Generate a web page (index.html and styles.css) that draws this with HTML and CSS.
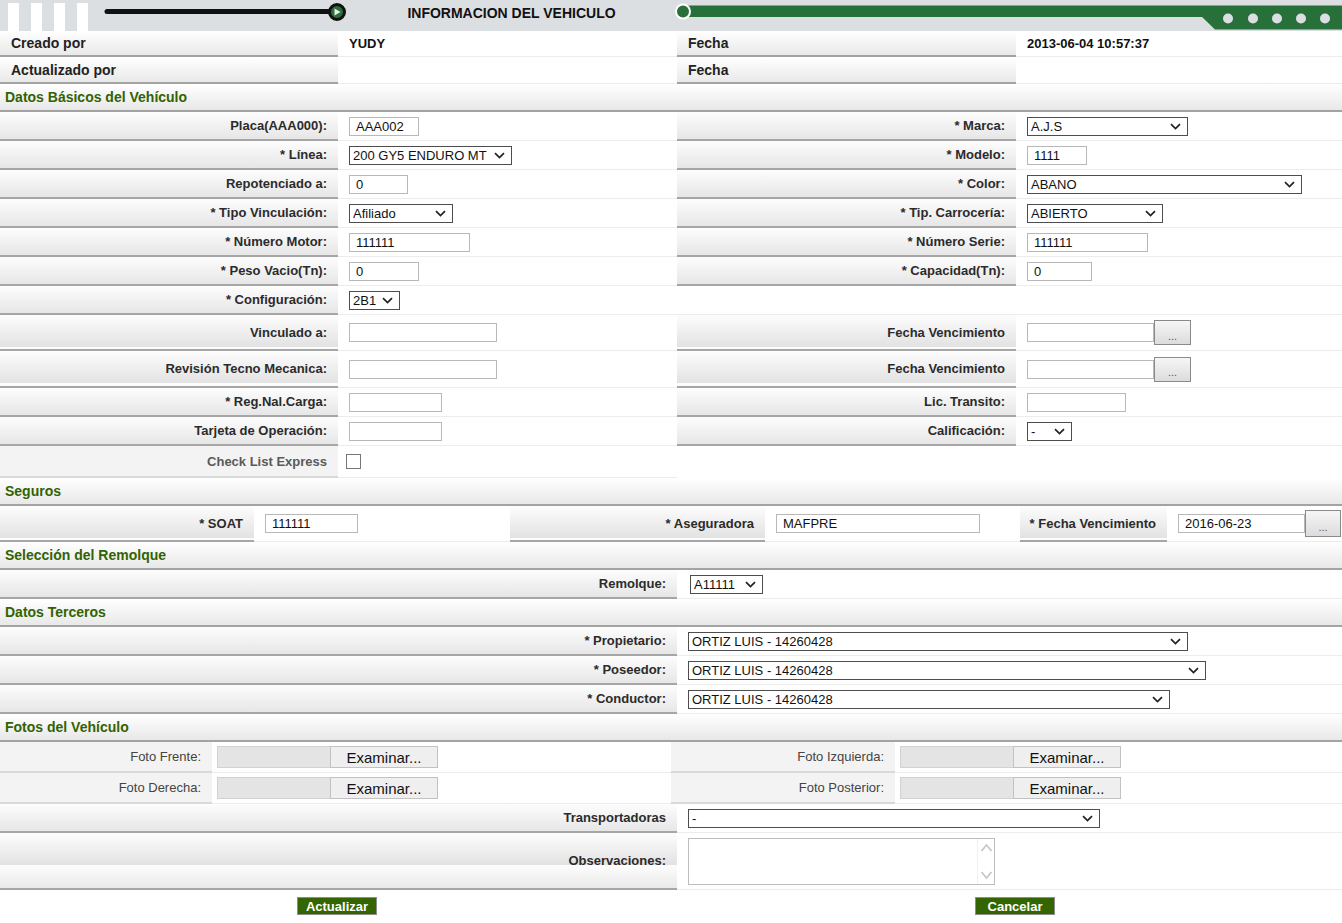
FILE: index.html
```html
<!DOCTYPE html>
<html lang="es">
<head>
<meta charset="utf-8">
<title>Informacion del vehiculo</title>
<link rel="stylesheet" href="styles.css">
</head>
<body>
<header class="topbar">
  <svg class="deco-left" width="400" height="31" viewBox="0 0 400 31" aria-hidden="true">
    <rect x="8" y="3" width="11" height="28" fill="#fff"/>
    <rect x="31" y="3" width="11" height="28" fill="#fff"/>
    <rect x="54" y="3" width="11" height="28" fill="#fff"/>
    <rect x="77" y="3" width="11" height="28" fill="#fff"/>
    <line x1="107" y1="11.5" x2="330" y2="11.5" stroke="#111" stroke-width="5" stroke-linecap="round"/>
    <circle cx="337" cy="12" r="7.5" fill="#2d6e3d" stroke="#111" stroke-width="3"/>
    <path d="M334.5 8.5 L340.5 12 L334.5 15.5 Z" fill="#e8f0e8"/>
  </svg>
  <h1 class="title">INFORMACION DEL VEHICULO</h1>
  <svg class="deco-right" width="719" height="31" viewBox="0 0 719 31" aria-hidden="true">
    <rect x="64" y="5.5" width="655" height="11.5" fill="#277039"/>
    <polygon points="578,16 592,29.5 719,29.5 719,16" fill="#277039"/>
    <circle cx="605" cy="18.5" r="5" fill="#dcdfe2"/>
    <circle cx="630" cy="18.5" r="5" fill="#dcdfe2"/>
    <circle cx="654" cy="18.5" r="5" fill="#dcdfe2"/>
    <circle cx="678" cy="18.5" r="5" fill="#dcdfe2"/>
    <circle cx="702" cy="18.5" r="5" fill="#dcdfe2"/>
    <circle cx="60" cy="11.5" r="7" fill="#277039" stroke="#fff" stroke-width="2"/>
  </svg>
</header>

<main class="form">
  <div class="row info h26">
    <div class="lbl left">Creado por</div><div class="val strong">YUDY</div>
    <div class="lbl left">Fecha</div><div class="val strong">2013-06-04 10:57:37</div>
  </div>
  <div class="row info h27">
    <div class="lbl left">Actualizado por</div><div class="val"></div>
    <div class="lbl left">Fecha</div><div class="val"></div>
  </div>

  <div class="section h27">Datos Básicos del Vehículo</div>
  <div class="row">
    <div class="lbl">Placa(AAA000):</div><div class="val"><input class="txt w70" value="AAA002"></div>
    <div class="lbl">* Marca:</div><div class="val"><select class="sel w161"><option>A.J.S</option></select></div>
  </div>
  <div class="row">
    <div class="lbl">* Línea:</div><div class="val"><select class="sel w163"><option>200 GY5 ENDURO MT</option></select></div>
    <div class="lbl">* Modelo:</div><div class="val"><input class="txt w60" value="1111"></div>
  </div>
  <div class="row">
    <div class="lbl">Repotenciado a:</div><div class="val"><input class="txt w59" value="0"></div>
    <div class="lbl">* Color:</div><div class="val"><select class="sel w275"><option>ABANO</option></select></div>
  </div>
  <div class="row">
    <div class="lbl">* Tipo Vinculación:</div><div class="val"><select class="sel w104"><option>Afiliado</option></select></div>
    <div class="lbl">* Tip. Carrocería:</div><div class="val"><select class="sel w136"><option>ABIERTO</option></select></div>
  </div>
  <div class="row">
    <div class="lbl">* Número Motor:</div><div class="val"><input class="txt w121" value="111111"></div>
    <div class="lbl">* Número Serie:</div><div class="val"><input class="txt w121" value="111111"></div>
  </div>
  <div class="row">
    <div class="lbl">* Peso Vacio(Tn):</div><div class="val"><input class="txt w70" value="0"></div>
    <div class="lbl">* Capacidad(Tn):</div><div class="val"><input class="txt w65" value="0"></div>
  </div>
  <div class="row">
    <div class="lbl">* Configuración:</div><div class="val"><select class="sel w51"><option>2B1</option></select></div>
    <div class="val span2"></div>
  </div>
  <div class="row h36">
    <div class="lbl">Vinculado a:</div><div class="val"><input class="txt w148"></div>
    <div class="lbl">Fecha Vencimiento</div>
    <div class="val"><span class="date"><input class="txt w127"><button class="pick" type="button">...</button></span></div>
  </div>
  <div class="row h37">
    <div class="lbl">Revisión Tecno Mecanica:</div><div class="val"><input class="txt w148"></div>
    <div class="lbl">Fecha Vencimiento</div>
    <div class="val"><span class="date"><input class="txt w127"><button class="pick" type="button">...</button></span></div>
  </div>
  <div class="row">
    <div class="lbl">* Reg.Nal.Carga:</div><div class="val"><input class="txt w93"></div>
    <div class="lbl">Lic. Transito:</div><div class="val"><input class="txt w99"></div>
  </div>
  <div class="row">
    <div class="lbl">Tarjeta de Operación:</div><div class="val"><input class="txt w93"></div>
    <div class="lbl">Calificación:</div><div class="val"><select class="sel w45"><option>-</option></select></div>
  </div>
  <div class="row h32">
    <div class="lbl flat muted">Check List Express</div><div class="val chk"><input type="checkbox" class="box"></div>
    <div class="val span2 noline"></div>
  </div>

  <div class="section h27">Seguros</div>
  <div class="row soat h36">
    <div class="lbl">* SOAT</div><div class="val"><input class="txt w93" value="111111"></div>
    <div class="lbl">* Aseguradora</div><div class="val"><input class="txt w204" value="MAFPRE"></div>
    <div class="lbl">* Fecha Vencimiento</div>
    <div class="val"><span class="date"><input class="txt w127" value="2016-06-23"><button class="pick tall" type="button">...</button></span></div>
  </div>

  <div class="section h28">Selección del Remolque</div>
  <div class="row wide">
    <div class="lbl">Remolque:</div><div class="val p13"><select class="sel w73"><option>A11111</option></select></div>
  </div>

  <div class="section h29">Datos Terceros</div>
  <div class="row wide">
    <div class="lbl">* Propietario:</div><div class="val"><select class="sel w500"><option>ORTIZ LUIS - 14260428</option></select></div>
  </div>
  <div class="row wide">
    <div class="lbl">* Poseedor:</div><div class="val"><select class="sel w518"><option>ORTIZ LUIS - 14260428</option></select></div>
  </div>
  <div class="row wide">
    <div class="lbl">* Conductor:</div><div class="val"><select class="sel w482"><option>ORTIZ LUIS - 14260428</option></select></div>
  </div>

  <div class="section h28">Fotos del Vehículo</div>
  <div class="row fotos h31">
    <div class="lbl flat plain">Foto Frente:</div>
    <div class="val p5"><span class="file"><span class="file-name"></span><button class="file-btn" type="button">Examinar...</button></span></div>
    <div class="lbl flat plain">Foto Izquierda:</div>
    <div class="val p5"><span class="file"><span class="file-name"></span><button class="file-btn" type="button">Examinar...</button></span></div>
  </div>
  <div class="row fotos h31">
    <div class="lbl flat plain">Foto Derecha:</div>
    <div class="val p5"><span class="file"><span class="file-name"></span><button class="file-btn" type="button">Examinar...</button></span></div>
    <div class="lbl flat plain">Foto Posterior:</div>
    <div class="val p5"><span class="file"><span class="file-name"></span><button class="file-btn" type="button">Examinar...</button></span></div>
  </div>
  <div class="row wide">
    <div class="lbl">Transportadoras</div><div class="val"><select class="sel w412"><option>-</option></select></div>
  </div>
  <div class="row wide h57">
    <div class="lbl">Observaciones:</div>
    <div class="val">
      <span class="ta"><textarea class="ta-field"></textarea><span class="ta-scroll">
        <svg width="17" height="14" viewBox="0 0 17 14"><path d="M3.5 10 L8.5 4 L13.5 10" fill="none" stroke="#c4c4c4" stroke-width="1.6"/></svg>
        <svg width="17" height="14" viewBox="0 0 17 14"><path d="M3.5 4 L8.5 10 L13.5 4" fill="none" stroke="#c4c4c4" stroke-width="1.6"/></svg>
      </span></span>
    </div>
  </div>

  <div class="actions">
    <div class="act left"><button class="btn" type="button">Actualizar</button></div>
    <div class="act right"><button class="btn" type="button">Cancelar</button></div>
  </div>
</main>
</body>
</html>
```

FILE: styles.css
```css
* { box-sizing: border-box; }

body {
  margin: 0;
  width: 1342px;
  background: #fff;
  color: #222;
  font-family: "Liberation Sans", Arial, sans-serif;
  font-size: 13px;
}

/* ---------- top bar ---------- */
.topbar {
  display: flex;
  height: 31px;
  background: #dcdfe2;
}
.deco-left, .deco-right { display: block; flex: none; }
.title {
  width: 223px;
  margin: 0;
  padding-bottom: 5px;
  font-size: 14px;
  font-weight: bold;
  line-height: 26px;
  text-align: center;
  color: #111;
  white-space: nowrap;
}

/* ---------- rows ---------- */
.row {
  display: grid;
  grid-template-columns: 338px 339px 339px 1fr;
  height: 29px;
}
.row.wide { grid-template-columns: 677px 1fr; }
.row.soat { grid-template-columns: 254px 256px 255px 255px 147px 1fr; }
.row.fotos { grid-template-columns: 212px 459px 224px 1fr; }

.h26 { height: 26px; }
.h27 { height: 27px; }
.h28 { height: 28px; }
.h29 { height: 29px; }
.h31 { height: 31px; }
.h32 { height: 32px; }
.h36 { height: 36px; }
.h37 { height: 37px; }
.h57 { height: 57px; }

.lbl {
  display: flex;
  align-items: center;
  justify-content: flex-end;
  padding-right: 11px;
  font-weight: bold;
  color: #2b2b2b;
  white-space: nowrap;
  background: linear-gradient(#fdfdfd, #e2e2e2) top / 100% 32px repeat-y;
  border-bottom: 2px solid #a6a6a6;
}
.lbl.left {
  justify-content: flex-start;
  padding: 0 0 0 11px;
  font-size: 14px;
  color: #222;
  background: linear-gradient(#ffffff, #e9e9e9);
  border-bottom: 2px solid #a3a3a3;
}
.lbl.flat {
  background: #f3f3f3;
  border-bottom: 2px solid #d9d9d9;
}
.lbl.muted { color: #5a5a5a; }
.lbl.plain { font-weight: normal; color: #444; }

.val {
  display: flex;
  align-items: center;
  padding-left: 11px;
  border-bottom: 1px solid #ececec;
  background: #fff;
}
.val.strong { font-weight: bold; color: #111; }
.val.span2 { grid-column: span 2; }
.val.noline { border-bottom-color: #fff; }
.val.chk { padding-left: 8px; }
.val.p13 { padding-left: 13px; }
.val.p5 { padding-left: 5px; }

/* ---------- section headers ---------- */
.section {
  display: flex;
  align-items: center;
  height: 28px;
  padding-left: 5px;
  font-size: 14px;
  font-weight: bold;
  color: #326302;
  background: linear-gradient(#ffffff, #e8e8e8);
  border-bottom: 2px solid #a3a3a3;
}

/* ---------- controls ---------- */
.txt {
  height: 19px;
  margin: 0;
  padding: 0 6px;
  border: 1px solid #b8b8b8;
  border-radius: 0;
  background: #fff;
  font-family: "Liberation Sans", Arial, sans-serif;
  font-size: 13px;
  color: #111;
  outline: none;
}
.sel {
  -webkit-appearance: none;
  appearance: none;
  height: 19px;
  margin: 0;
  padding: 0 20px 0 3px;
  border: 1px solid #4d4d4d;
  border-radius: 0;
  background: #fff url("data:image/svg+xml,%3Csvg xmlns='http://www.w3.org/2000/svg' width='11' height='7' viewBox='0 0 11 7'%3E%3Cpath d='M1 1.2 L5.5 5.6 L10 1.2' fill='none' stroke='%23222' stroke-width='1.7'/%3E%3C/svg%3E") no-repeat right 6px center;
  font-family: "Liberation Sans", Arial, sans-serif;
  font-size: 13px;
  line-height: 15px;
  color: #111;
  outline: none;
}

.w45 { width: 45px; }
.w51 { width: 51px; }
.w59 { width: 59px; }
.w60 { width: 60px; }
.w65 { width: 65px; }
.w70 { width: 70px; }
.w73 { width: 73px; }
.w93 { width: 93px; }
.w99 { width: 99px; }
.w104 { width: 104px; }
.w121 { width: 121px; }
.w127 { width: 127px; }
.w136 { width: 136px; }
.w148 { width: 148px; }
.w161 { width: 161px; }
.w163 { width: 163px; }
.w204 { width: 204px; }
.w275 { width: 275px; }
.w412 { width: 412px; }
.w482 { width: 482px; }
.w500 { width: 500px; }
.w518 { width: 518px; }

.date { display: flex; align-items: center; }
.pick {
  width: 37px;
  height: 25px;
  margin: 0;
  padding: 6px 0 0;
  border: 1px solid #8a8a8a;
  background: linear-gradient(#f6f6f6, #dcdcdc);
  font-family: "Liberation Sans", Arial, sans-serif;
  font-size: 11px;
  color: #555;
}
.pick.tall { width: 36px; height: 27px; }

.box {
  width: 15px;
  height: 15px;
  margin: 0;
  -webkit-appearance: none;
  appearance: none;
  border: 1px solid #777;
  background: #fff;
}

.file { display: flex; height: 22px; }
.file-name {
  width: 113px;
  height: 22px;
  background: #e4e4e4;
  border: 1px solid #d2d2d2;
  border-right: none;
}
.file-btn {
  width: 108px;
  height: 22px;
  margin: 0;
  padding: 0;
  border: 1px solid #c2c2c2;
  background: #efefef;
  font-family: "Liberation Sans", Arial, sans-serif;
  font-size: 15px;
  color: #111;
}

.ta {
  display: flex;
  width: 307px;
  height: 47px;
  border: 1px solid #bdbdbd;
  background: #fff;
}
.ta-field {
  flex: 1;
  margin: 0;
  border: none;
  resize: none;
  outline: none;
  font-family: "Liberation Sans", Arial, sans-serif;
  font-size: 13px;
}
.ta-scroll {
  display: flex;
  flex-direction: column;
  justify-content: space-between;
  width: 17px;
  padding: 2px 0;
  border-left: 1px solid #f0f0f0;
}
.ta-scroll svg { display: block; }

/* ---------- actions ---------- */
.actions {
  display: grid;
  grid-template-columns: 677px 1fr;
  padding-top: 7px;
  height: 34px;
}
.act { display: flex; justify-content: center; }
.act.left { padding-right: 3px; }
.act.right { padding-left: 11px; }
.btn {
  width: 80px;
  height: 18px;
  margin: 0;
  padding: 0;
  border: 1px solid #8d8d8d;
  background: #336600;
  color: #fff;
  font-family: "Liberation Sans", Arial, sans-serif;
  font-size: 13px;
  font-weight: bold;
}
```
